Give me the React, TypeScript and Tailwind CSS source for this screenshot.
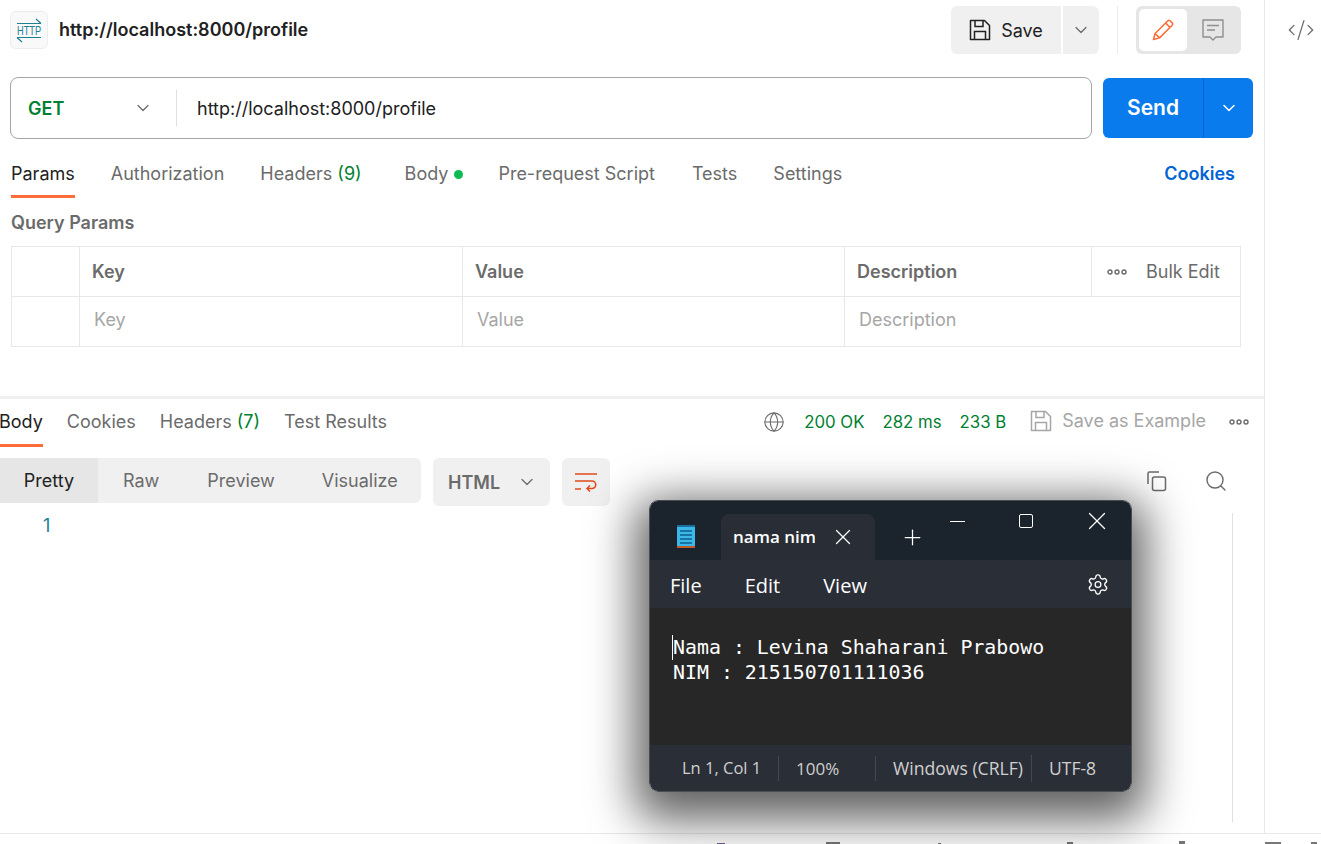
import React from 'react';
import { ChevronDown, CodeXml, Globe, Plus, Search, Settings, X } from 'lucide-react';

const ui = { fontFamily: 'Inter, "Liberation Sans", sans-serif' };
const win = { fontFamily: '"Open Sans", "Noto Sans", sans-serif' };
const mono = { fontFamily: '"DejaVu Sans Mono", "Liberation Mono", monospace' };

const HttpLogo = () => (
  <svg width="30" height="26" viewBox="0 0 30 26" fill="none" stroke="#1d7f93" strokeWidth="1.2">
    <path d="M3 6.5h24M27 6.5l-5-4.5" />
    <path d="M3 20.5h24M3 20.5l5 4.5" />
    <text transform="translate(3 17.5) scale(.77 1)" fontSize="12" fill="#1d7f93" stroke="none" fontFamily='"Liberation Sans", sans-serif'>
      HTTP
    </text>
  </svg>
);

const SaveIcon = ({ color, size = 22 }: { color: string; size?: number }) => (
  <svg width={size} height={size} viewBox="0 0 22 22" fill="none" stroke={color} strokeWidth="1.5">
    <path d="M1.5 1.5h14l5 5v14h-19z" strokeLinejoin="round" />
    <path d="M6 1.5v6h8v-6M5.5 20.5v-8h11v8" />
  </svg>
);

const PencilIcon = () => (
  <svg width="22" height="22" viewBox="0 0 22 22" fill="none" stroke="#ff6c37" strokeWidth="1.5" strokeLinejoin="round">
    <path d="M1.5 20.5l1.6-6L15.6 2a2 2 0 0 1 2.8 0l1.6 1.6a2 2 0 0 1 0 2.8L7.5 18.9z" />
    <path d="M13.6 4l4.4 4.4M3.1 14.5l4.4 4.4" />
  </svg>
);

const CommentIcon = () => (
  <svg width="22" height="22" viewBox="0 0 22 22" fill="none" stroke="#8f8f8f" strokeWidth="1.4" strokeLinejoin="round">
    <path d="M1 1h20v17h-7l-3 3-3-3H1z" />
    <path d="M5 6.5h12M5 11h8" />
  </svg>
);

const CopyIcon = () => (
  <svg width="22" height="22" viewBox="0 0 22 22" fill="none" stroke="#6b6b6b" strokeWidth="1.5" strokeLinejoin="round">
    <rect x="6.5" y="7" width="13" height="13.5" rx="2" />
    <path d="M2 14V3.5A1.5 1.5 0 0 1 3.5 2H13" />
  </svg>
);

const WrapIcon = () => (
  <svg width="22" height="22" viewBox="0 0 22 22" fill="none" stroke="#e0491c" strokeWidth="1.5">
    <path d="M0 3h22M0 10h17a3.75 3.75 0 0 1 0 7.5h-5M0 18h6" />
    <path d="M15 14.5l-3 3 3 3" />
  </svg>
);

const Dots = ({ color }: { color: string }) => (
  <svg width="20" height="6" viewBox="0 0 20 6" fill="none" stroke={color} strokeWidth="1.4">
    <circle cx="3" cy="3" r="2" />
    <circle cx="10" cy="3" r="2" />
    <circle cx="17" cy="3" r="2" />
  </svg>
);

const NotepadIcon = () => (
  <svg width="18" height="24" viewBox="0 0 18 24">
    <rect x="0" y="1" width="18" height="22" fill="#3db6e8" />
    <rect x="0" y="21" width="18" height="2" fill="#c05a26" />
    <rect x="0" y="0" width="18" height="2" fill="#1b6f9c" />
    <path d="M3 6h12M3 10h12M3 14h12M3 18h12" stroke="#0b5f8a" strokeWidth="1.5" />
  </svg>
);

const Notepad = () => (
  <div
    className="absolute left-[649px] top-[500px] flex h-[292px] w-[483px] flex-col overflow-hidden rounded-[9px] border border-[#4a4d52] text-white shadow-[0_14px_46px_14px_rgba(0,0,0,0.62)]"
    style={win}
  >
    <div className="flex h-[59px] shrink-0 bg-[#1b232d]">
      <div className="flex w-[71px] shrink-0 items-center justify-center pt-[12px]">
        <NotepadIcon />
      </div>
      <div className="mt-[13px] flex w-[154px] shrink-0 items-center rounded-t-[8px] bg-[#292e36] pl-[12px]">
        <span className="w-[82px] overflow-hidden text-[17px] font-semibold whitespace-nowrap">nama nim</span>
        <X size={26} strokeWidth={1.2} className="ml-[15px]" />
      </div>
      <div className="flex w-[74px] shrink-0 items-center justify-center pt-[14px]">
        <Plus size={25} strokeWidth={1.2} />
      </div>
      <div className="flex flex-1 items-start pt-[8px]">
        <div className="flex h-[24px] w-[16px] items-center justify-center">
          <div className="h-px w-[15px] bg-white"></div>
        </div>
        <div className="ml-[53px] flex h-[24px] w-[16px] items-center justify-center">
          <div className="h-[14px] w-[14px] rounded-[2px] border border-white"></div>
        </div>
        <div className="ml-[48px] flex h-[24px] w-[30px] items-center justify-center">
          <X size={30} strokeWidth={1} className="shrink-0" />
        </div>
      </div>
    </div>
    <div className="flex h-[48px] shrink-0 items-center bg-[#2a2e37] pr-[21px] pl-[20px] text-[20px]">
      <span className="pt-[3px]">File</span>
      <span className="ml-[43px] pt-[3px]">Edit</span>
      <span className="ml-[43px] pt-[3px]">View</span>
      <Settings size={24} strokeWidth={1.4} className="ml-auto pt-px" />
    </div>
    <div className="flex-1 bg-[#272727] pt-[27px] pl-[22px] text-[19.9px] leading-[25px]" style={mono}>
      <div className="border-l border-white whitespace-pre">Nama : Levina Shaharani Prabowo</div>
      <div className="pl-px whitespace-pre">NIM : 215150701111036</div>
    </div>
    <div className="flex h-[46px] shrink-0 items-center bg-[#2a2e37] pt-px text-[17px] text-[#d0d0d0]">
      <span className="w-[129px] border-r border-[#444951] pl-[32px] text-[16.5px]">Ln 1, Col 1</span>
      <span className="w-[97px] border-r border-[#444951] pl-[17px]">100%</span>
      <span className="w-[156px] border-r border-[#444951] pl-[17px] text-[17.6px]">Windows (CRLF)</span>
      <span className="pl-[17px] text-[17.5px]">UTF-8</span>
    </div>
  </div>
);

export default function App() {
  return (
    <div className="relative flex h-[844px] w-[1321px] flex-col overflow-hidden bg-white text-[18px] text-[#6b6b6b]" style={ui}>
      <div className="flex flex-1">
        <div className="flex w-[1265px] flex-col border-r border-[#e8e8e8]">
          <div className="flex h-[60px] items-center pr-[23px] pl-[10px]">
            <div className="flex h-[38px] w-[38px] items-center justify-center rounded-[6px] border border-[#ededed] bg-[#f9f9f9]">
              <HttpLogo />
            </div>
            <span className="ml-[11px] -mt-px text-[18px] font-semibold text-[#212121]">http://localhost:8000/profile</span>
            <div className="ml-auto flex h-[48px] w-[110px] items-center justify-center gap-[10px] rounded-l-[6px] bg-[#f0f0f0] text-[#212121]">
              <SaveIcon color="#212121" />
              <span>Save</span>
            </div>
            <div className="ml-[2px] flex h-[48px] w-[36px] items-center justify-center rounded-r-[6px] bg-[#f0f0f0]">
              <ChevronDown size={20} strokeWidth={1.5} />
            </div>
            <div className="mx-[18px] h-[48px] w-px bg-[#ededed]"></div>
            <div className="flex h-[48px] w-[105px] items-center rounded-[6px] bg-[#e6e6e6] p-[3px]">
              <div className="flex h-[42px] w-[48px] items-center justify-center rounded-[5px] bg-white">
                <PencilIcon />
              </div>
              <div className="flex flex-1 items-center justify-center">
                <CommentIcon />
              </div>
            </div>
          </div>

          <div className="mt-[17px] flex h-[62px] pr-[11px] pl-[10px]">
            <div className="flex w-[1082px] items-center rounded-[8px] border border-[#a6a6a6]">
              <span className="ml-[17px] w-[105px] font-semibold text-[#007f31]">GET</span>
              <ChevronDown size={20} strokeWidth={1.5} />
              <div className="ml-[23px] h-[36px] w-px bg-[#e0e0e0]"></div>
              <span className="ml-[20px] text-[#212121]">http://localhost:8000/profile</span>
            </div>
            <div className="mt-px ml-[11px] flex h-[60px] w-[150px] rounded-[6px] bg-[#097bed] text-white">
              <div className="flex w-[101px] items-center justify-center border-r border-[#0265d2] text-[21px] font-semibold">Send</div>
              <div className="flex flex-1 items-center justify-center">
                <ChevronDown size={20} strokeWidth={1.8} />
              </div>
            </div>
          </div>

          <div className="mt-[24px] flex pr-[29px] pl-[11px]">
            <span className="border-b-[3px] border-[#ff6c37] pb-[10px] leading-[22px] text-[#212121]">Params</span>
            <span className="ml-[36px] leading-[22px]">Authorization</span>
            <span className="ml-[36px] leading-[22px]">
              Headers <span className="text-[#007f31]">(9)</span>
            </span>
            <span className="ml-[43px] flex items-center self-start leading-[22px]">
              Body
              <span className="ml-[6px] h-[9px] w-[9px] rounded-full bg-[#0cbb52]"></span>
            </span>
            <span className="ml-[35px] leading-[22px]">Pre-request Script</span>
            <span className="ml-[37px] leading-[22px]">Tests</span>
            <span className="ml-[36px] leading-[22px]">Settings</span>
            <span className="ml-auto leading-[22px] font-semibold text-[#0265d2]">Cookies</span>
          </div>

          <div className="mt-[14px] pl-[11px] leading-[22px] font-semibold">Query Params</div>

          <div className="mt-[12px] ml-[11px] w-[1230px] border border-[#e8e8e8]">
            <div className="grid h-[50px] grid-cols-[68px_383px_382px_247px_1fr] border-b border-[#e8e8e8] font-semibold">
              <div className="border-r border-[#e8e8e8]"></div>
              <div className="flex items-center border-r border-[#e8e8e8] pl-[12px]">Key</div>
              <div className="flex items-center border-r border-[#e8e8e8] pl-[12px]">Value</div>
              <div className="flex items-center border-r border-[#e8e8e8] pl-[12px]">Description</div>
              <div className="flex items-center pl-[15px] font-normal">
                <Dots color="#6b6b6b" />
                <span className="ml-[19px]">Bulk Edit</span>
              </div>
            </div>
            <div className="grid h-[49px] grid-cols-[68px_383px_382px_1fr] text-[#a6a6a6]">
              <div className="border-r border-[#e8e8e8]"></div>
              <div className="flex items-center border-r border-[#e8e8e8] pb-[5px] pl-[14px]">Key</div>
              <div className="flex items-center border-r border-[#e8e8e8] pb-[5px] pl-[14px]">Value</div>
              <div className="flex items-center pb-[5px] pl-[14px]">Description</div>
            </div>
          </div>

          <div className="mt-[49px] h-[3px] bg-[#f0f0f0]"></div>

          <div className="mt-[12px] flex items-start pr-[15px]">
            <span className="-ml-px border-b-[3px] border-[#ff6c37] pb-[11px] leading-[22px] text-[#212121]">Body</span>
            <span className="ml-[24px] leading-[22px]">Cookies</span>
            <span className="ml-[24px] leading-[22px]">
              Headers <span className="text-[#007f31]">(7)</span>
            </span>
            <span className="ml-[24px] leading-[22px]">Test Results</span>
            <div className="ml-auto flex items-center leading-[22px]">
              <Globe size={22} strokeWidth={1.2} />
              <span className="ml-[19px] text-[16.8px] text-[#007f31]">200 OK</span>
              <span className="ml-[18px] text-[16.8px] text-[#007f31]">282 ms</span>
              <span className="ml-[18px] text-[16.8px] text-[#007f31]">233 B</span>
              <span className="ml-[24px] -mt-[3px]">
                <SaveIcon color="#a6a6a6" />
              </span>
              <span className="ml-[10px] -mt-[3px] text-[#a6a6a6]">Save as Example</span>
              <span className="ml-[23px]">
                <Dots color="#6b6b6b" />
              </span>
            </div>
          </div>

          <div className="mt-[11px] flex items-start">
            <div className="flex h-[45px] w-[421px] items-center rounded-r-[6px] bg-[#f0f0f0]">
              <span className="flex h-full w-[98px] items-center justify-center bg-[#e6e6e6] text-[#212121]">Pretty</span>
              <span className="ml-[25px]">Raw</span>
              <span className="ml-[48px]">Preview</span>
              <span className="ml-[47px]">Visualize</span>
            </div>
            <div className="ml-[12px] flex h-[48px] w-[117px] items-center rounded-[6px] bg-[#f0f0f0] pl-[15px] font-semibold">
              HTML
              <ChevronDown size={20} strokeWidth={1.5} className="ml-[17px]" />
            </div>
            <div className="ml-[12px] flex h-[48px] w-[48px] items-center justify-center rounded-[6px] bg-[#f0f0f0]">
              <WrapIcon />
            </div>
            <div className="mt-[11px] ml-auto flex items-center pr-[36px]">
              <CopyIcon />
              <Search size={24} strokeWidth={1.4} className="ml-[36px]" />
            </div>
          </div>

          <div className="mt-[7px] flex h-[309px] pr-[31px] leading-[26px]">
            <span className="ml-[43px] text-[#1d7f93]">1</span>
            <div className="ml-auto w-px bg-[#e0e0e0]"></div>
          </div>
        </div>
        <div className="flex flex-1 justify-center pt-[16px] pl-[16px]">
          <CodeXml size={28} strokeWidth={1.1} />
        </div>
      </div>
      {/* status bar, only the tops of its icons are in frame */}
      <div className="flex h-[11px] items-end overflow-hidden border-t border-[#e8e8e8] pl-[717px]">
        <div className="h-px w-[8px] bg-[#6f5f8f]"></div>
        <div className="ml-[101px] h-[2px] w-[14px] bg-[#777777]"></div>
        <div className="ml-[98px] h-px w-[3px] bg-[#777777]"></div>
        <div className="ml-[126px] h-[2px] w-[6px] bg-[#777777]"></div>
        <div className="ml-[106px] h-[3px] w-[6px] bg-[#777777]"></div>
        <div className="ml-[80px] h-[2px] w-[16px] bg-[#777777]"></div>
        <div className="ml-[30px] h-[2px] w-[6px] bg-[#777777]"></div>
      </div>
      <Notepad />
    </div>
  );
}
